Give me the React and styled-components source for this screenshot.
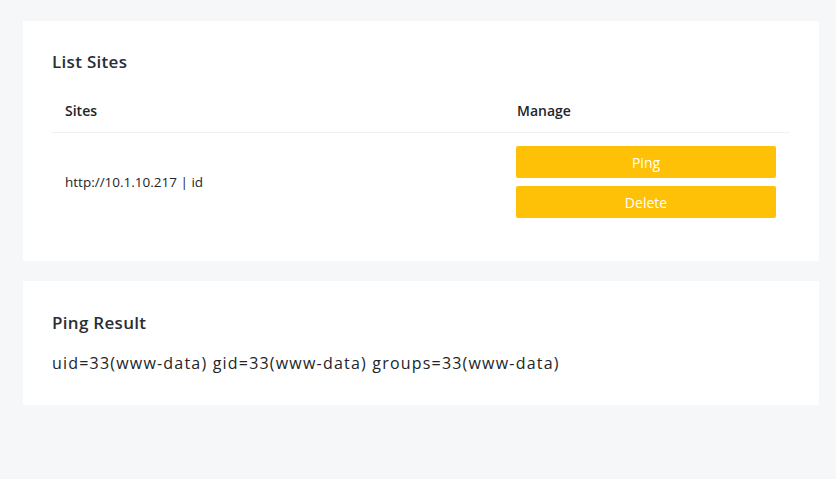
import React from "react";
import styled, { createGlobalStyle } from "styled-components";

const GlobalStyle = createGlobalStyle`
  html, body {
    margin: 0;
    padding: 0;
    background-color: #f6f7f9;
    font-family: "Open Sans", "Liberation Sans", sans-serif;
    color: #212529;
  }
`;

const Container = styled.div`
  box-sizing: border-box;
  width: 836px;
  min-height: 479px;
  padding: 21px 17px 20px 23px;
  display: flex;
  flex-direction: column;
  gap: 20px;
`;

const Card = styled.div`
  background-color: white;
  padding: ${(props) => props.pad || "29px 30px 31px 29px"};
  box-sizing: border-box;
`;

const CardTitle = styled.h4`
  margin: 0;
  font-size: 17px;
  font-weight: 600;
  line-height: 24px;
  color: #2a2d33;
  letter-spacing: 0.3px;
`;

const Table = styled.div`
  margin-top: 14px;
  width: 738px;
  display: grid;
  grid-template-columns: 452px 1fr;
`;

const HeadCell = styled.div`
  padding: 13px 13px 11px;
  font-size: 14px;
  font-weight: 600;
  line-height: 20px;
  color: #212529;
  border-bottom: 1px solid #eef0f3;
`;

const Cell = styled.div`
  padding: 13px 12px 12px;
  font-size: 13.5px;
  color: #212529;
  display: flex;
  flex-direction: ${(props) => (props.stack ? "column" : "row")};
  align-items: ${(props) => (props.stack ? "stretch" : "center")};
  gap: 8px;
  padding-left: ${(props) => (props.stack ? "12px" : "13px")};
`;

const Button = styled.button`
  width: 260px;
  height: 32px;
  border: none;
  border-radius: 2px;
  background-color: #ffc107;
  color: white;
  font-family: inherit;
  font-size: 14px;
  font-weight: 500;
  cursor: pointer;
`;

const Result = styled.p`
  margin: 16px 0 0;
  font-size: 16px;
  line-height: 24px;
  color: #212529;
  letter-spacing: 1.2px;
`;

const App = () => {
  const sites = ["http://10.1.10.217 | id"];
  return (
    <>
      <GlobalStyle />
      <Container>
        <Card>
          <CardTitle>List Sites</CardTitle>
          <Table>
            <HeadCell>Sites</HeadCell>
            <HeadCell>Manage</HeadCell>
            {sites.map((s, i) => (
              <React.Fragment key={i}>
                <Cell>{s}</Cell>
                <Cell stack>
                  <Button>Ping</Button>
                  <Button>Delete</Button>
                </Cell>
              </React.Fragment>
            ))}
          </Table>
        </Card>
        <Card pad="30px 30px 30px 29px">
          <CardTitle>Ping Result</CardTitle>
          <Result>uid=33(www-data) gid=33(www-data) groups=33(www-data)</Result>
        </Card>
      </Container>
    </>
  );
};

export default App;
